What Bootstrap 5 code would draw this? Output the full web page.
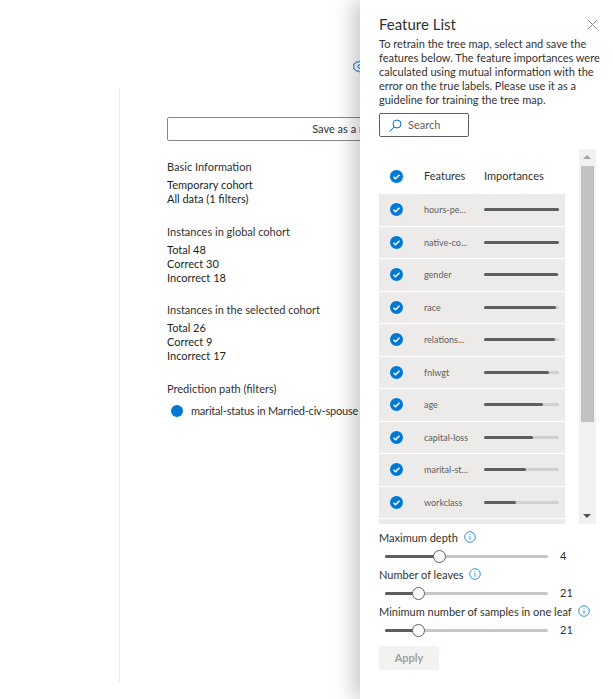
<!DOCTYPE html>
<html lang="en">

<head>
    <meta charset="UTF-8">
    <meta name="viewport" content="width=device-width, initial-scale=1.0">
    <title>Feature List</title>
    <link href="https://cdn.jsdelivr.net/npm/bootstrap@5.3.0/dist/css/bootstrap.min.css" rel="stylesheet">
    <style>
        body {
            font-family: "Lato", "Open Sans", sans-serif;
            font-size: 11px;
            color: #323130;
            height: 699px;
            overflow: hidden;
            background: #fff;
        }

        /* Left side, behind the panel */
        .page-wrap {
            width: 360px;
            height: 699px;
            padding: 60px 0 17px 119px;
            overflow: hidden;
        }

        .gear-row {
            height: 28px;
            padding-left: 234px;
            line-height: 0;
        }

        .info-col {
            border-left: 1px solid #edebe9;
            height: 594px;
            padding: 29px 0 0 47px;
            overflow: hidden;
        }

        .save-btn {
            width: 392px;
            height: 24px;
            border: 1px solid #8a8886;
            border-radius: 2px;
            background: #fff;
            color: #323130;
            line-height: 22px;
            text-align: center;
            margin-bottom: 18px;
        }

        .info-head {
            line-height: 16px;
            margin-bottom: 3px;
        }

        .info-head.path-head {
            margin-bottom: 6px;
        }

        .info-group {
            margin-bottom: 17.5px;
            line-height: 14px;
            color: #201f1e;
        }

        .path-dot {
            width: 12px;
            height: 12px;
            border-radius: 50%;
            background: #0078d4;
            margin: 0 8px 0 4px;
        }

        .path-row {
            white-space: nowrap;
            letter-spacing: -0.2px;
        }

        /* Feature panel */
        .feature-panel {
            position: absolute;
            top: 0;
            left: 360px;
            width: 253px;
            height: 699px;
            background: #fff;
            box-shadow: -8px 0 18px rgba(0, 0, 0, 0.2);
            padding: 14px 0 0 19px;
            overflow: hidden;
        }

        .panel-title {
            font-size: 15px;
            line-height: 20px;
            font-weight: 400;
            margin: 0 0 3px;
        }

        .panel-close {
            position: absolute;
            top: 19px;
            left: 227px;
            line-height: 0;
        }

        .panel-text {
            width: 224px;
            line-height: 14px;
            margin-bottom: 6px;
        }

        .search-box {
            width: 90px;
            height: 24px;
            border: 1px solid #605e5c;
            border-radius: 2px;
            padding-left: 9px;
            color: #605e5c;
            gap: 6px;
            margin-bottom: 12px;
        }

        .list-wrap {
            height: 375px;
        }

        .feature-list {
            width: 186px;
            height: 375px;
            overflow: hidden;
            margin-right: 14px;
        }

        .head-row {
            height: 45px;
            padding-top: 10px;
        }

        .feature-row {
            height: 31.5px;
            margin-bottom: 1px;
            background: #edebe9;
        }

        .check-cell {
            width: 37px;
            padding-left: 10px;
            line-height: 0;
        }

        .name-cell {
            width: 60px;
            margin-left: 8px;
            color: #605e5c;
            font-size: 9px;
        }

        .head-row .name-cell {
            color: #323130;
            font-size: 11px;
        }

        .imp-bar {
            width: 75px;
            height: 3px;
            border-radius: 2px;
            background: #d2d0ce;
        }

        .imp-fill {
            height: 3px;
            border-radius: 2px;
            background: #605e5c;
        }

        .scroll-track {
            width: 17px;
            height: 375px;
            background: #f1f1f1;
            padding-top: 17px;
        }

        .scroll-thumb {
            width: 13px;
            height: 256px;
            margin-left: 2px;
            background: #c1c1c1;
        }

        .scroll-arrow {
            position: absolute;
            left: 4px;
            width: 0;
            height: 0;
            border-left: 4px solid transparent;
            border-right: 4px solid transparent;
        }

        .scroll-up {
            top: 6px;
            border-bottom: 4px solid #a3a3a3;
        }

        .scroll-down {
            bottom: 6px;
            border-top: 4px solid #505050;
        }

        .slider-stack {
            margin-top: 4px;
        }

        .slider-label {
            height: 20px;
            line-height: 20px;
            white-space: nowrap;
        }

        .info-icon {
            margin: 0 0 5px 6px;
        }

        .slider-row {
            height: 17px;
            width: 197px;
            padding-left: 6px;
        }

        .slider-track {
            width: 163px;
            height: 3px;
            background: #c8c6c4;
            border-radius: 2px;
        }

        .slider-fill {
            height: 3px;
            background: #605e5c;
            border-radius: 2px;
        }

        .slider-knob {
            position: absolute;
            top: -5px;
            width: 13px;
            height: 13px;
            margin-left: -6px;
            border-radius: 50%;
            background: #fff;
            border: 1px solid #605e5c;
        }

        .slider-val {
            margin-left: 12px;
        }

        .apply-btn {
            width: 60px;
            height: 24px;
            margin-top: 7px;
            background: #f3f2f1;
            color: #a19f9d;
            border: 0;
            border-radius: 2px;
            font-size: 11px;
            font-weight: 700;
        }
    </style>
</head>

<body>

    <div class="page-wrap">
        <div class="gear-row">
            <svg width="7" height="13" viewBox="0 0 7 13" fill="none" stroke="#0078d4" stroke-width="1">
                <path d="M7 .8L5.200 2.200 3.500 1.700 2.300 3.400.7 4 1 6.500.7 9 2.300 9.600 3.500 11.300 5.200 10.800 7 12.200" />
                <path d="M7 4.500a2 2 0 0 0 0 4" />
            </svg>
        </div>
        <div class="info-col">
            <div class="save-btn">Save as a new cohort</div>

            <div class="info-head">Basic Information</div>
            <div class="info-group">Temporary cohort<br>All data (1 filters)</div>

            <div class="info-head">Instances in global cohort</div>
            <div class="info-group">Total 48<br>Correct 30<br>Incorrect 18</div>

            <div class="info-head">Instances in the selected cohort</div>
            <div class="info-group">Total 26<br>Correct 9<br>Incorrect 17</div>

            <div class="info-head path-head">Prediction path (filters)</div>
            <div class="path-row d-flex align-items-center">
                <span class="path-dot"></span>
                <span>marital-status in Married-civ-spouse</span>
            </div>
        </div>
    </div>

    <!-- Panel -->
    <div class="feature-panel">
        <h1 class="panel-title">Feature List</h1>
        <span class="panel-close">
            <svg width="11" height="11" viewBox="0 0 11 11" stroke="#8a8886" stroke-width="1">
                <path d="M1 1l9 9M10 1l-9 9" />
            </svg>
        </span>
        <p class="panel-text">To retrain the tree map, select and save the features below. The feature importances were calculated using mutual information with the error on the true labels. Please use it as a guideline for training the tree map.</p>

        <div class="search-box d-flex align-items-center">
            <svg width="13" height="13" viewBox="0 0 13 13" fill="none" stroke="#0078d4" stroke-width="1">
                <circle cx="8" cy="5" r="4" />
                <path d="M5 8l-4.500 4.500" />
            </svg>
            <span>Search</span>
        </div>

        <div class="list-wrap d-flex">
            <div class="feature-list" id="feature-list">
                <div class="head-row d-flex align-items-center">
                    <span class="check-cell"><svg width="15" height="15" viewBox="0 0 15 15"><circle cx="7.500" cy="7.500" r="7" fill="#0078d4" stroke="#fff" /><path d="M4.500 7.800l2 2 4-4" fill="none" stroke="#fff" stroke-width="1.500" /></svg></span>
                    <span class="name-cell">Features</span>
                    <span>Importances</span>
                </div>
            </div>
            <div class="scroll-track position-relative">
                <span class="scroll-arrow scroll-up"></span>
                <div class="scroll-thumb"></div>
                <span class="scroll-arrow scroll-down"></span>
            </div>
        </div>

        <div class="slider-stack" id="sliders"></div>

        <button class="apply-btn" type="button" disabled>Apply</button>
    </div>

    <script src="https://cdn.jsdelivr.net/npm/bootstrap@5.3.0/dist/js/bootstrap.bundle.min.js"></script>
    <script>
        const features = [
            ["hours-pe...", 100], ["native-co...", 100], ["gender", 98], ["race", 96],
            ["relations...", 95], ["fnlwgt", 86], ["age", 79], ["capital-loss", 65],
            ["marital-st...", 56], ["workclass", 43], ["", 0]
        ];
        const check = '<svg width="15" height="15" viewBox="0 0 15 15"><circle cx="7.500" cy="7.500" r="7" fill="#0078d4" stroke="#fff" /><path d="M4.500 7.800l2 2 4-4" fill="none" stroke="#fff" stroke-width="1.500" /></svg>';
        const list = document.getElementById("feature-list");
        features.forEach(function (f) {
            list.insertAdjacentHTML("beforeend",
                '<div class="feature-row d-flex align-items-center">' +
                '<span class="check-cell">' + check + '</span>' +
                '<span class="name-cell">' + f[0] + '</span>' +
                '<div class="imp-bar"><div class="imp-fill" style="width:' + f[1] + '%"></div></div>' +
                '</div>');
        });

        const info = '<svg class="info-icon" width="12" height="12" viewBox="0 0 12 12" fill="none" stroke="#0078d4" stroke-width="0.800"><circle cx="6" cy="6" r="5.300" /><path d="M6 5.200v3.600M6 3.200v1" /></svg>';
        const sliders = [
            ["Maximum depth", 33, "4"],
            ["Number of leaves", 20, "21"],
            ["Minimum number of samples in one leaf", 20, "21"]
        ];
        const holder = document.getElementById("sliders");
        sliders.forEach(function (s) {
            holder.insertAdjacentHTML("beforeend",
                '<div class="slider-label">' + s[0] + info + '</div>' +
                '<div class="slider-row d-flex align-items-center">' +
                '<div class="slider-track position-relative"><div class="slider-fill" style="width:' + s[1] + '%"></div>' +
                '<span class="slider-knob" style="left:' + s[1] + '%"></span></div>' +
                '<span class="slider-val">' + s[2] + '</span></div>');
        });
    </script>
</body>

</html>
